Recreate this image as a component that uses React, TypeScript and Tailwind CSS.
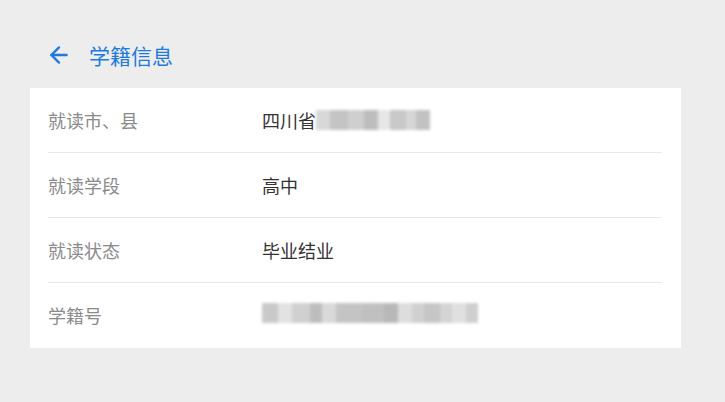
import { ArrowLeft } from "lucide-react"

const Blur = ({ blocks }: { blocks: { w: number; c: string }[] }) => (
  <span className="inline-flex h-[20px] items-stretch blur-[1.5px]">
    {blocks.map((b, i) => (
      <span key={i} style={{ width: b.w, background: b.c }} />
    ))}
  </span>
)

const rows = [
  {
    label: "就读市、县",
    value: (
      <span className="flex items-center">
        四川省
        <Blur
          blocks={[
            { w: 14, c: "#d8d8d8" },
            { w: 18, c: "#c4c4c4" },
            { w: 16, c: "#cfcfcf" },
            { w: 14, c: "#bdbdbd" },
            { w: 12, c: "#e6e6e6" },
            { w: 16, c: "#c8c8c8" },
            { w: 10, c: "#d6d6d6" },
            { w: 14, c: "#c2c2c2" },
          ]}
        />
      </span>
    ),
  },
  { label: "就读学段", value: "高中" },
  { label: "就读状态", value: "毕业结业" },
  {
    label: "学籍号",
    value: (
      <Blur
        blocks={[
          { w: 16, c: "#c9c9c9" },
          { w: 14, c: "#e2e2e2" },
          { w: 18, c: "#d0d0d0" },
          { w: 12, c: "#bdbdbd" },
          { w: 14, c: "#d9d9d9" },
          { w: 26, c: "#c4c4c4" },
          { w: 22, c: "#c0c0c0" },
          { w: 14, c: "#b8b8b8" },
          { w: 14, c: "#dddddd" },
          { w: 12, c: "#d0d0d0" },
          { w: 16, c: "#c6c6c6" },
          { w: 12, c: "#d4d4d4" },
          { w: 14, c: "#e0e0e0" },
          { w: 12, c: "#cfcfcf" },
        ]}
      />
    ),
  },
]

export default function App() {
  return (
    <div
      className="min-h-[402px] w-[725px] bg-[#ededed] pt-[38px]"
      style={{ fontFamily: '"Noto Sans CJK SC", "Noto Sans", sans-serif' }}
    >
      {/* Header */}
      <div className="flex h-[34px] items-center pl-[46px] text-[#1f7ae0]">
        <ArrowLeft size={26} strokeWidth={2.2} />
        <span className="ml-[17px] text-[21px] leading-none">学籍信息</span>
      </div>

      {/* Card */}
      <div className="ml-[30px] mt-[16px] w-[651px] bg-white pl-[18px] pr-[19px]">
        {rows.map((r, i) => (
          <div
            key={r.label}
            className={`flex h-[65px] items-center text-[18px] ${
              i < rows.length - 1 ? "border-b border-[#e8e8e8]" : ""
            }`}
          >
            <span className="w-[214px] shrink-0 text-[#8a8a8a]">{r.label}</span>
            <span className="text-[#333333]">{r.value}</span>
          </div>
        ))}
      </div>
    </div>
  )
}
